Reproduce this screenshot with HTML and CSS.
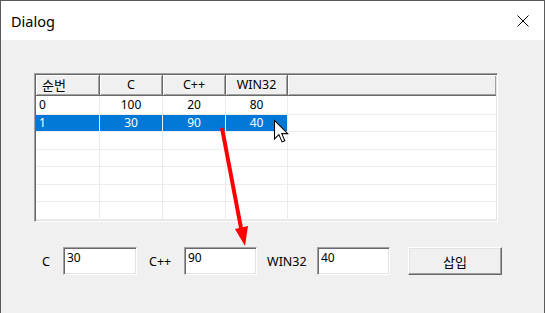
FILE: index.html
```html
<!DOCTYPE html>
<html lang="ko">
<head>
  <meta charset="UTF-8">
  <title>Dialog</title>
  <link rel="stylesheet" href="styles.css">
</head>
<body>
  <div class="window">
    <div class="titlebar">
      <span class="title">Dialog</span>
      <svg class="close" width="12" height="12" viewBox="0 0 12 12">
        <path d="M0.5 0.5 L11.5 11.5 M11.5 0.5 L0.5 11.5" stroke="#000" stroke-width="1" fill="none"/>
      </svg>
    </div>

    <div class="client">
      <div class="list">
        <div class="list-head">
          <div class="hcell left ko">순번</div>
          <div class="hcell">C</div>
          <div class="hcell">C++</div>
          <div class="hcell">WIN32</div>
          <div class="hcell rest"></div>
        </div>
        <div class="list-body">
          <div class="row">
            <div class="cell left">0</div>
            <div class="cell">100</div>
            <div class="cell">20</div>
            <div class="cell">80</div>
            <div class="cell rest"></div>
          </div>
          <div class="row selected">
            <div class="cell left">1</div>
            <div class="cell">30</div>
            <div class="cell">90</div>
            <div class="cell">40</div>
            <div class="cell rest"></div>
          </div>
          <div class="row"><div class="cell"></div><div class="cell"></div><div class="cell"></div><div class="cell"></div><div class="cell rest"></div></div>
          <div class="row"><div class="cell"></div><div class="cell"></div><div class="cell"></div><div class="cell"></div><div class="cell rest"></div></div>
          <div class="row"><div class="cell"></div><div class="cell"></div><div class="cell"></div><div class="cell"></div><div class="cell rest"></div></div>
          <div class="row"><div class="cell"></div><div class="cell"></div><div class="cell"></div><div class="cell"></div><div class="cell rest"></div></div>
          <div class="row"><div class="cell"></div><div class="cell"></div><div class="cell"></div><div class="cell"></div><div class="cell rest"></div></div>
          <div class="row"><div class="cell"></div><div class="cell"></div><div class="cell"></div><div class="cell"></div><div class="cell rest"></div></div>
        </div>
      </div>

      <div class="inputs">
        <label class="lbl lbl-c">C</label>
        <div class="edit edit-c">30</div>
        <label class="lbl lbl-cpp">C++</label>
        <div class="edit edit-cpp">90</div>
        <label class="lbl lbl-win">WIN32</label>
        <div class="edit edit-win">40</div>
        <button class="btn">삽입</button>
      </div>
    </div>

    <!-- 화살표와 커서 -->
    <svg class="overlay" width="545" height="313" viewBox="0 0 545 313">
      <line x1="222" y1="128" x2="241" y2="228" stroke="#ff0000" stroke-width="4"/>
      <polygon points="245,246 235,229 248,226" fill="#ff0000"/>
      <g transform="translate(274.5 120.5) scale(1.15)">
        <path d="M0 0 L0 16 L3.8 12.3 L6.6 18.6 L9 17.6 L6.3 11.4 L11.5 11.4 Z" fill="#fff" stroke="#000" stroke-width="0.9" stroke-linejoin="miter"/>
      </g>
    </svg>
  </div>
</body>
</html>
```

FILE: styles.css
```css
:root {
  --face: #f0f0f0;
  --shadow: #a0a0a0;
  --dark: #696969;
  --light: #e3e3e3;
  --grid: #ececec;
  --select: #0078d7;
}

* {
  margin: 0;
  padding: 0;
  box-sizing: border-box;
}

body {
  background: #ffffff;
  font-family: 'Noto Sans', 'Noto Sans CJK KR', sans-serif;
  font-size: 12px;
  color: #000;
}

.window {
  position: relative;
  width: 545px;
  height: 313px;
  border: 1px solid #5a5a5a;
  border-bottom: none;
  background: var(--face);
  overflow: hidden;
}

.titlebar {
  height: 39px;
  background: #ffffff;
  display: flex;
  align-items: center;
  justify-content: space-between;
  padding: 0 15px 0 10px;
}

.title {
  font-size: 14.5px;
  color: #000;
}

.close {
  display: block;
}

.client {
  padding: 33px 0 0 33px;
}

.ko {
  font-family: 'Noto Sans CJK KR', sans-serif;
  font-size: 13px;
}

/* 리스트 컨트롤 */
.list {
  width: 464px;
  height: 149px;
  background: #ffffff;
  border: 1px solid;
  border-color: var(--shadow) #ffffff #ffffff var(--shadow);
  box-shadow: inset 1px 1px 0 var(--dark), inset -1px -1px 0 var(--light);
  padding: 1px;
  overflow: hidden;
}

.list-head,
.row {
  display: grid;
  grid-template-columns: 64px 63px 63px 62px 1fr;
}

.list-head {
  height: 21px;
  margin-bottom: 1px;
}

.hcell {
  background: var(--face);
  border-right: 1px solid var(--dark);
  border-bottom: 1px solid var(--dark);
  box-shadow: inset 1px 1px 0 #ffffff, inset -1px -1px 0 var(--shadow);
  text-align: center;
  line-height: 19px;
  font-size: 12.5px;
  color: #000;
}

.hcell.left {
  text-align: left;
  padding-left: 6px;
  font-size: 13px;
}

.hcell.rest {
  border-right: none;
}

.list-body {
  height: 126px;
  overflow: hidden;
}

.row {
  height: 17.5px;
}

.cell {
  border-right: 1px solid var(--grid);
  border-bottom: 1px solid var(--grid);
  text-align: center;
  line-height: 16px;
}

.cell.left {
  text-align: left;
  padding-left: 3px;
}

.cell.rest {
  border-right: none;
}

.row.selected .cell {
  background: var(--select);
  color: #ffffff;
}

.row.selected .cell.rest {
  background: #ffffff;
}

/* 입력 줄 */
.inputs {
  display: flex;
  align-items: center;
  margin-top: 25px;
  margin-left: 8px;
}

.lbl {
  color: #000;
  font-size: 12.5px;
}

.lbl-c { width: 21px; }
.lbl-cpp { margin-left: 12px; width: 35px; }
.lbl-win { margin-left: 10px; width: 50px; }

.edit {
  height: 28px;
  background: #ffffff;
  border: 1px solid;
  border-color: var(--shadow) #ffffff #ffffff var(--shadow);
  box-shadow: inset 1px 1px 0 var(--dark), inset -1px -1px 0 var(--light);
  padding: 2px 0 0 3px;
  line-height: 16px;
}

.edit-c { width: 74px; }
.edit-cpp { width: 73px; }
.edit-win { width: 73px; }

.btn {
  margin-left: 18px;
  width: 94px;
  height: 28px;
  background: var(--face);
  border: 1px solid;
  border-color: #ffffff var(--dark) var(--dark) #ffffff;
  box-shadow: inset -1px -1px 0 var(--shadow), inset 1px 1px 0 var(--light);
  font-family: 'Noto Sans CJK KR', sans-serif;
  font-size: 13px;
  color: #000;
}

.overlay {
  position: absolute;
  left: -1px;
  top: -1px;
  pointer-events: none;
}
```
